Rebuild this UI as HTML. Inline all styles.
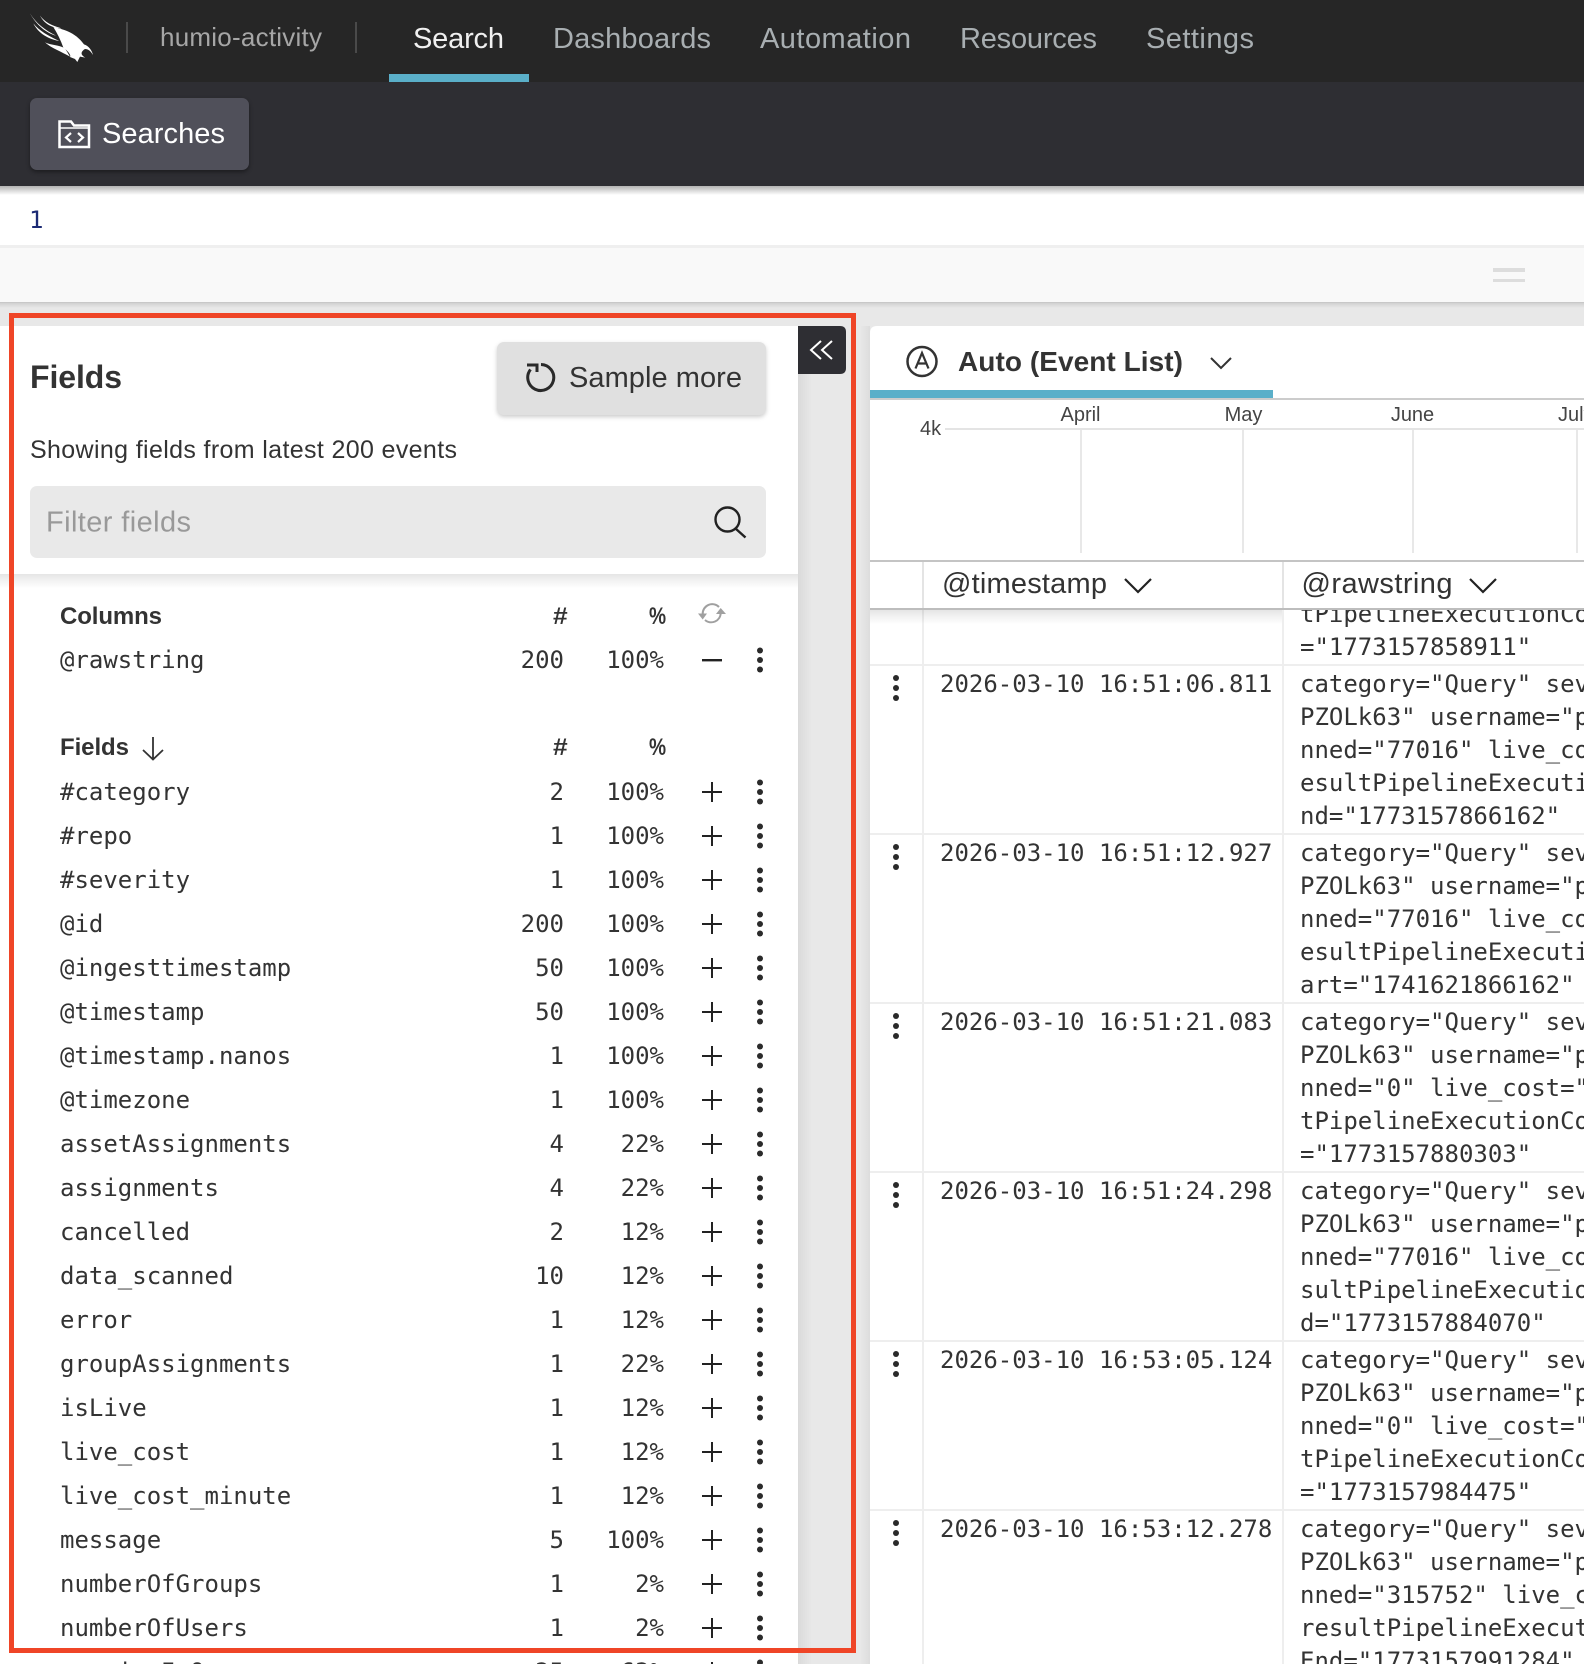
<!DOCTYPE html>
<html><head><meta charset="utf-8"><title>Search</title>
<style>
html,body{margin:0;padding:0;width:1584px;height:1664px;overflow:hidden;background:#e8e8e8}
svg{display:block;position:absolute;left:0;top:0}
text{font-family:"Liberation Sans",sans-serif;fill:#333}
.m text,text.m{font-family:"DejaVu Sans Mono","Liberation Mono",monospace;font-size:24px;fill:#333}
.e text{text-anchor:end}
.n{font-size:29px;fill:#a8aeb1}
.b{font-weight:bold}
</style></head>
<body>
<svg width="1584" height="1664" viewBox="0 0 1584 1664" xmlns="http://www.w3.org/2000/svg">
<defs>
<linearGradient id="gd" x1="0" y1="0" x2="0" y2="1"><stop offset="0" stop-color="#000" stop-opacity=".3"/><stop offset="1" stop-color="#000" stop-opacity="0"/></linearGradient>
<linearGradient id="gs" x1="0" y1="0" x2="0" y2="1"><stop offset="0" stop-color="#000" stop-opacity=".1"/><stop offset="1" stop-color="#000" stop-opacity="0"/></linearGradient>
<linearGradient id="gr" x1="0" y1="0" x2="1" y2="0"><stop offset="0" stop-color="#000" stop-opacity=".06"/><stop offset="1" stop-color="#000" stop-opacity="0"/></linearGradient>
<linearGradient id="gl" x1="1" y1="0" x2="0" y2="0"><stop offset="0" stop-color="#000" stop-opacity=".05"/><stop offset="1" stop-color="#000" stop-opacity="0"/></linearGradient>
<g id="pd"><path d="M702 0H722M712 -10V10" stroke="#222" stroke-width="2" fill="none"/><circle cx="760" cy="-9.500" r="3" fill="#2a2a2a"/><circle cx="760" cy="0" r="3" fill="#2a2a2a"/><circle cx="760" cy="9.500" r="3" fill="#2a2a2a"/></g>
<g id="rd"><circle cx="896" cy="13" r="3" fill="#2a2a2a"/><circle cx="896" cy="23" r="3" fill="#2a2a2a"/><circle cx="896" cy="33" r="3" fill="#2a2a2a"/></g>
</defs>

<!-- backgrounds -->
<rect x="0" y="0" width="1584" height="1664" fill="#e8e8e8"/>
<rect x="0" y="0" width="1584" height="82" fill="#262626"/>
<rect x="0" y="82" width="1584" height="104" fill="#2e2e33"/>
<rect x="0" y="186" width="1584" height="61" fill="#fff"/>
<rect x="0" y="186" width="1584" height="9" fill="url(#gd)"/>
<rect x="0" y="245" width="1584" height="3" fill="#efefef"/>
<rect x="0" y="248" width="1584" height="54" fill="#f9f9f9"/>
<rect x="0" y="302" width="1584" height="1" fill="#c8c8c8"/>
<rect x="0" y="303" width="1584" height="5" fill="url(#gs)"/>
<rect x="1493" y="268" width="32" height="4" fill="#ddd"/>
<rect x="1493" y="279" width="32" height="3" fill="#ddd"/>

<!-- nav -->
<g transform="translate(20 5) scale(.3333)" fill="#fff">
<path d="M30 25C48 55 75 75 108 92C78 84 48 58 30 25Z"/>
<path d="M60 32C75 52 95 62 125 70C95 70 72 55 60 32Z"/>
<path d="M40 55C58 78 85 92 118 108C85 102 55 85 40 55Z"/>
<path d="M100 66C125 72 165 80 192 118C205 122 216 135 219 150C212 138 205 132 195 132C185 138 178 148 196 158L180 155L172 171L165 162L150 156C155 150 140 135 130 128C122 105 112 85 100 66Z"/>
<path d="M75 112C95 122 115 118 135 130L150 155C125 140 95 130 75 112Z"/>
</g>
<rect x="126" y="22" width="2" height="31" fill="#4a4a4a"/>
<rect x="355" y="22" width="2" height="31" fill="#4a4a4a"/>
<text x="160" y="46" font-size="26" textLength="162" style="fill:#a6a6a6">humio-activity</text>
<text x="413" y="48" font-size="29" textLength="91" style="fill:#f0f0f0">Search</text>
<text class="n" x="553" y="48" textLength="158">Dashboards</text>
<text class="n" x="760" y="48" textLength="151">Automation</text>
<text class="n" x="960" y="48" textLength="137">Resources</text>
<text class="n" x="1146" y="48" textLength="108">Settings</text>
<rect x="389" y="74" width="140" height="8" fill="#5aafc9"/>

<!-- searches button -->
<rect x="30" y="98" width="219" height="72" rx="7" fill="#50505a" style="filter:drop-shadow(0 2px 2px rgba(0,0,0,.4))"/>
<path d="M59.500 147V121.500H71L74 125.500H89V147Z" fill="none" stroke="#fff" stroke-width="2.500"/>
<path d="M60 128H89" stroke="#fff" stroke-width="1.500"/>
<path d="M71 133L66 137.500L71 142M78 133L83 137.500L78 142" fill="none" stroke="#fff" stroke-width="2.200"/>
<text x="102" y="143" font-size="29" textLength="123" style="fill:#fff">Searches</text>

<!-- editor -->
<text class="m" x="29" y="228" style="fill:#1c2a74">1</text>

<!-- right panel -->
<rect x="860" y="326" width="10" height="1338" fill="url(#gl)"/>
<path d="M870 1664V333Q870 326 877 326H1584V1664Z" fill="#fff"/>

<!-- event rows -->
<g class="m">
<text x="1300" y="622">tPipelineExecutionCompleted</text>
<text x="1300" y="655">="1773157858911"</text>

<text x="940" y="692">2026-03-10 16:51:06.811</text>
<text x="1300" y="692">category="Query" severity="Info"</text>
<text x="1300" y="725">PZOLk63" username="pipeline"</text>
<text x="1300" y="758">nned="77016" live_cost="0"</text>
<text x="1300" y="791">esultPipelineExecutionTime</text>
<text x="1300" y="824">nd="1773157866162"</text>

<text x="940" y="861">2026-03-10 16:51:12.927</text>
<text x="1300" y="861">category="Query" severity="Info"</text>
<text x="1300" y="894">PZOLk63" username="pipeline"</text>
<text x="1300" y="927">nned="77016" live_cost="0"</text>
<text x="1300" y="960">esultPipelineExecutionTime</text>
<text x="1300" y="993">art="1741621866162"</text>

<text x="940" y="1030">2026-03-10 16:51:21.083</text>
<text x="1300" y="1030">category="Query" severity="Info"</text>
<text x="1300" y="1063">PZOLk63" username="pipeline"</text>
<text x="1300" y="1096">nned="0" live_cost="0.0"</text>
<text x="1300" y="1129">tPipelineExecutionCompleted</text>
<text x="1300" y="1162">="1773157880303"</text>

<text x="940" y="1199">2026-03-10 16:51:24.298</text>
<text x="1300" y="1199">category="Query" severity="Info"</text>
<text x="1300" y="1232">PZOLk63" username="pipeline"</text>
<text x="1300" y="1265">nned="77016" live_cost="0"</text>
<text x="1300" y="1298">sultPipelineExecutionTime</text>
<text x="1300" y="1331">d="1773157884070"</text>

<text x="940" y="1368">2026-03-10 16:53:05.124</text>
<text x="1300" y="1368">category="Query" severity="Info"</text>
<text x="1300" y="1401">PZOLk63" username="pipeline"</text>
<text x="1300" y="1434">nned="0" live_cost="0.0"</text>
<text x="1300" y="1467">tPipelineExecutionCompleted</text>
<text x="1300" y="1500">="1773157984475"</text>

<text x="940" y="1537">2026-03-10 16:53:12.278</text>
<text x="1300" y="1537">category="Query" severity="Info"</text>
<text x="1300" y="1570">PZOLk63" username="pipeline"</text>
<text x="1300" y="1603">nned="315752" live_cost="0"</text>
<text x="1300" y="1636">resultPipelineExecutionTime</text>
<text x="1300" y="1669">End="1773157991284"</text>
</g>
<g fill="#eee">
<rect x="870" y="664" width="714" height="2"/><rect x="870" y="833" width="714" height="2"/><rect x="870" y="1002" width="714" height="2"/><rect x="870" y="1171" width="714" height="2"/><rect x="870" y="1340" width="714" height="2"/><rect x="870" y="1509" width="714" height="2"/>
<rect x="922" y="610" width="2" height="1054"/><rect x="1282" y="610" width="2" height="1054"/>
</g>
<use href="#rd" y="665"/><use href="#rd" y="834"/><use href="#rd" y="1003"/><use href="#rd" y="1172"/><use href="#rd" y="1341"/><use href="#rd" y="1510"/>

<!-- table header & chart -->
<rect x="870" y="400" width="714" height="208" fill="#fff"/>
<rect x="870" y="610" width="412" height="14" fill="url(#gs)"/>
<rect x="870" y="398" width="714" height="2" fill="#ccc"/>
<rect x="870" y="390" width="403" height="8" fill="#5aafc9"/>
<circle cx="922" cy="361.500" r="14.500" fill="none" stroke="#333" stroke-width="2.500"/>
<path d="M915.500 368.500L922 353L928.500 368.500M917.500 363.500H926.500" fill="none" stroke="#333" stroke-width="2.200"/>
<text class="b" x="958" y="371" font-size="28" textLength="225">Auto (Event List)</text>
<path d="M1211 358L1221 368L1231 358" fill="none" stroke="#333" stroke-width="2"/>
<rect x="945" y="428" width="639" height="2" fill="#e4e4e4"/>
<g fill="#e8e8e8"><rect x="1080" y="430" width="2" height="123"/><rect x="1242" y="430" width="2" height="123"/><rect x="1412" y="430" width="2" height="123"/><rect x="1576" y="430" width="2" height="123"/></g>
<text x="1080.500" y="421" style="fill:#444;text-anchor:middle" font-size="20">April</text>
<text x="1243.500" y="421" style="fill:#444;text-anchor:middle" font-size="20">May</text>
<text x="1412.500" y="421" style="fill:#444;text-anchor:middle" font-size="20">June</text>
<text x="1558" y="421" font-size="20" style="fill:#444">July</text>
<text x="920" y="435" font-size="20" style="fill:#444">4k</text>
<rect x="870" y="560" width="714" height="2" fill="#c4c4c4"/>
<rect x="870" y="608" width="714" height="2" fill="#bdbdbd"/>
<rect x="922" y="562" width="2" height="46" fill="#e4e4e4"/>
<rect x="1282" y="562" width="2" height="46" fill="#e4e4e4"/>
<text x="942" y="593" font-size="29" textLength="165">@timestamp</text>
<path d="M1125 579L1138 592L1151 579" fill="none" stroke="#222" stroke-width="2.200"/>
<text x="1301.500" y="593" font-size="29" textLength="151">@rawstring</text>
<path d="M1470 579L1483 592L1496 579" fill="none" stroke="#222" stroke-width="2.200"/>

<!-- left panel -->
<rect x="798" y="374" width="14" height="1290" fill="url(#gr)"/>
<rect x="0" y="326" width="798" height="1338" fill="#fff"/>
<rect x="0" y="574" width="798" height="14" fill="url(#gs)"/>
<path d="M798 326H840Q846 326 846 332V368Q846 374 840 374H798Z" fill="#2e2e33"/>
<path d="M821 341L811 350L821 359M832 341L822 350L832 359" fill="none" stroke="#fff" stroke-width="2"/>

<text class="b" x="30" y="388" font-size="32" textLength="92">Fields</text>
<rect x="497" y="342" width="269" height="73" rx="7" fill="#e0e0e0" style="filter:drop-shadow(0 2px 2px rgba(0,0,0,.2))"/>
<path d="M541 364.500A13 13 0 1 1 530.500 369.500" fill="none" stroke="#2a2a2a" stroke-width="3"/>
<path d="M527 365H537V372" fill="none" stroke="#2a2a2a" stroke-width="3"/>
<text x="569" y="387" font-size="29" textLength="173">Sample more</text>
<text x="30" y="458" font-size="25" textLength="427">Showing fields from latest 200 events</text>
<rect x="30" y="486" width="736" height="72" rx="7" fill="#e9e9e9"/>
<text x="46" y="531.500" font-size="29" textLength="145" style="fill:#999">Filter fields</text>
<circle cx="727.500" cy="519.500" r="12" fill="none" stroke="#222" stroke-width="2.400"/>
<path d="M735.500 528.500L745.500 537.500" stroke="#222" stroke-width="2.400"/>

<text class="b" x="60" y="624" font-size="24" textLength="102">Columns</text>
<text class="b" transform="translate(553 624) scale(1.1 1)" font-size="24">#</text>
<text class="b" transform="translate(649 624) scale(.8 1)" font-size="24">%</text>
<path d="M702.700 614A9.500 9.500 0 0 1 719 607M720.700 613A9.500 9.500 0 0 1 705 620" fill="none" stroke="#a0a0a0" stroke-width="2"/>
<path d="M698 613.500H707L702.700 619.500ZM716 614H726L720.700 608Z" fill="#a0a0a0"/>
<text class="m" x="60" y="668">@rawstring</text>
<text class="m" x="564" y="668" text-anchor="end">200</text>
<text class="m" x="664" y="668" text-anchor="end">100%</text>
<rect x="702" y="659" width="20" height="2.400" fill="#222"/>
<circle cx="760" cy="650.500" r="3" fill="#2a2a2a"/><circle cx="760" cy="660" r="3" fill="#2a2a2a"/><circle cx="760" cy="669.500" r="3" fill="#2a2a2a"/>

<text class="b" x="60" y="755" font-size="24" textLength="69">Fields</text>
<path d="M153 737V759M143 750L153 759.500L163 750" fill="none" stroke="#333" stroke-width="1.800"/>
<text class="b" transform="translate(553 755) scale(1.1 1)" font-size="24">#</text>
<text class="b" transform="translate(649 755) scale(.8 1)" font-size="24">%</text>

<g class="m">
<text x="60" y="800">#category</text>
<text x="60" y="844">#repo</text>
<text x="60" y="888">#severity</text>
<text x="60" y="932">@id</text>
<text x="60" y="976">@ingesttimestamp</text>
<text x="60" y="1020">@timestamp</text>
<text x="60" y="1064">@timestamp.nanos</text>
<text x="60" y="1108">@timezone</text>
<text x="60" y="1152">assetAssignments</text>
<text x="60" y="1196">assignments</text>
<text x="60" y="1240">cancelled</text>
<text x="60" y="1284">data_scanned</text>
<text x="60" y="1328">error</text>
<text x="60" y="1372">groupAssignments</text>
<text x="60" y="1416">isLive</text>
<text x="60" y="1460">live_cost</text>
<text x="60" y="1504">live_cost_minute</text>
<text x="60" y="1548">message</text>
<text x="60" y="1592">numberOfGroups</text>
<text x="60" y="1636">numberOfUsers</text>
<text x="60" y="1680">queriesInQueue</text>
</g>
<g class="m e">
<text x="564" y="800">2</text><text x="664" y="800">100%</text>
<text x="564" y="844">1</text><text x="664" y="844">100%</text>
<text x="564" y="888">1</text><text x="664" y="888">100%</text>
<text x="564" y="932">200</text><text x="664" y="932">100%</text>
<text x="564" y="976">50</text><text x="664" y="976">100%</text>
<text x="564" y="1020">50</text><text x="664" y="1020">100%</text>
<text x="564" y="1064">1</text><text x="664" y="1064">100%</text>
<text x="564" y="1108">1</text><text x="664" y="1108">100%</text>
<text x="564" y="1152">4</text><text x="664" y="1152">22%</text>
<text x="564" y="1196">4</text><text x="664" y="1196">22%</text>
<text x="564" y="1240">2</text><text x="664" y="1240">12%</text>
<text x="564" y="1284">10</text><text x="664" y="1284">12%</text>
<text x="564" y="1328">1</text><text x="664" y="1328">12%</text>
<text x="564" y="1372">1</text><text x="664" y="1372">22%</text>
<text x="564" y="1416">1</text><text x="664" y="1416">12%</text>
<text x="564" y="1460">1</text><text x="664" y="1460">12%</text>
<text x="564" y="1504">1</text><text x="664" y="1504">12%</text>
<text x="564" y="1548">5</text><text x="664" y="1548">100%</text>
<text x="564" y="1592">1</text><text x="664" y="1592">2%</text>
<text x="564" y="1636">1</text><text x="664" y="1636">2%</text>
<text x="564" y="1680">25</text><text x="664" y="1680">63%</text>
</g>
<use href="#pd" y="792"/><use href="#pd" y="836"/><use href="#pd" y="880"/><use href="#pd" y="924"/><use href="#pd" y="968"/><use href="#pd" y="1012"/><use href="#pd" y="1056"/><use href="#pd" y="1100"/><use href="#pd" y="1144"/><use href="#pd" y="1188"/><use href="#pd" y="1232"/><use href="#pd" y="1276"/><use href="#pd" y="1320"/><use href="#pd" y="1364"/><use href="#pd" y="1408"/><use href="#pd" y="1452"/><use href="#pd" y="1496"/><use href="#pd" y="1540"/><use href="#pd" y="1584"/><use href="#pd" y="1628"/><use href="#pd" y="1672"/>

<!-- highlight border -->
<rect x="11.500" y="315.500" width="842" height="1335" fill="none" stroke="#ef4527" stroke-width="5"/>
</svg>
</body></html>
